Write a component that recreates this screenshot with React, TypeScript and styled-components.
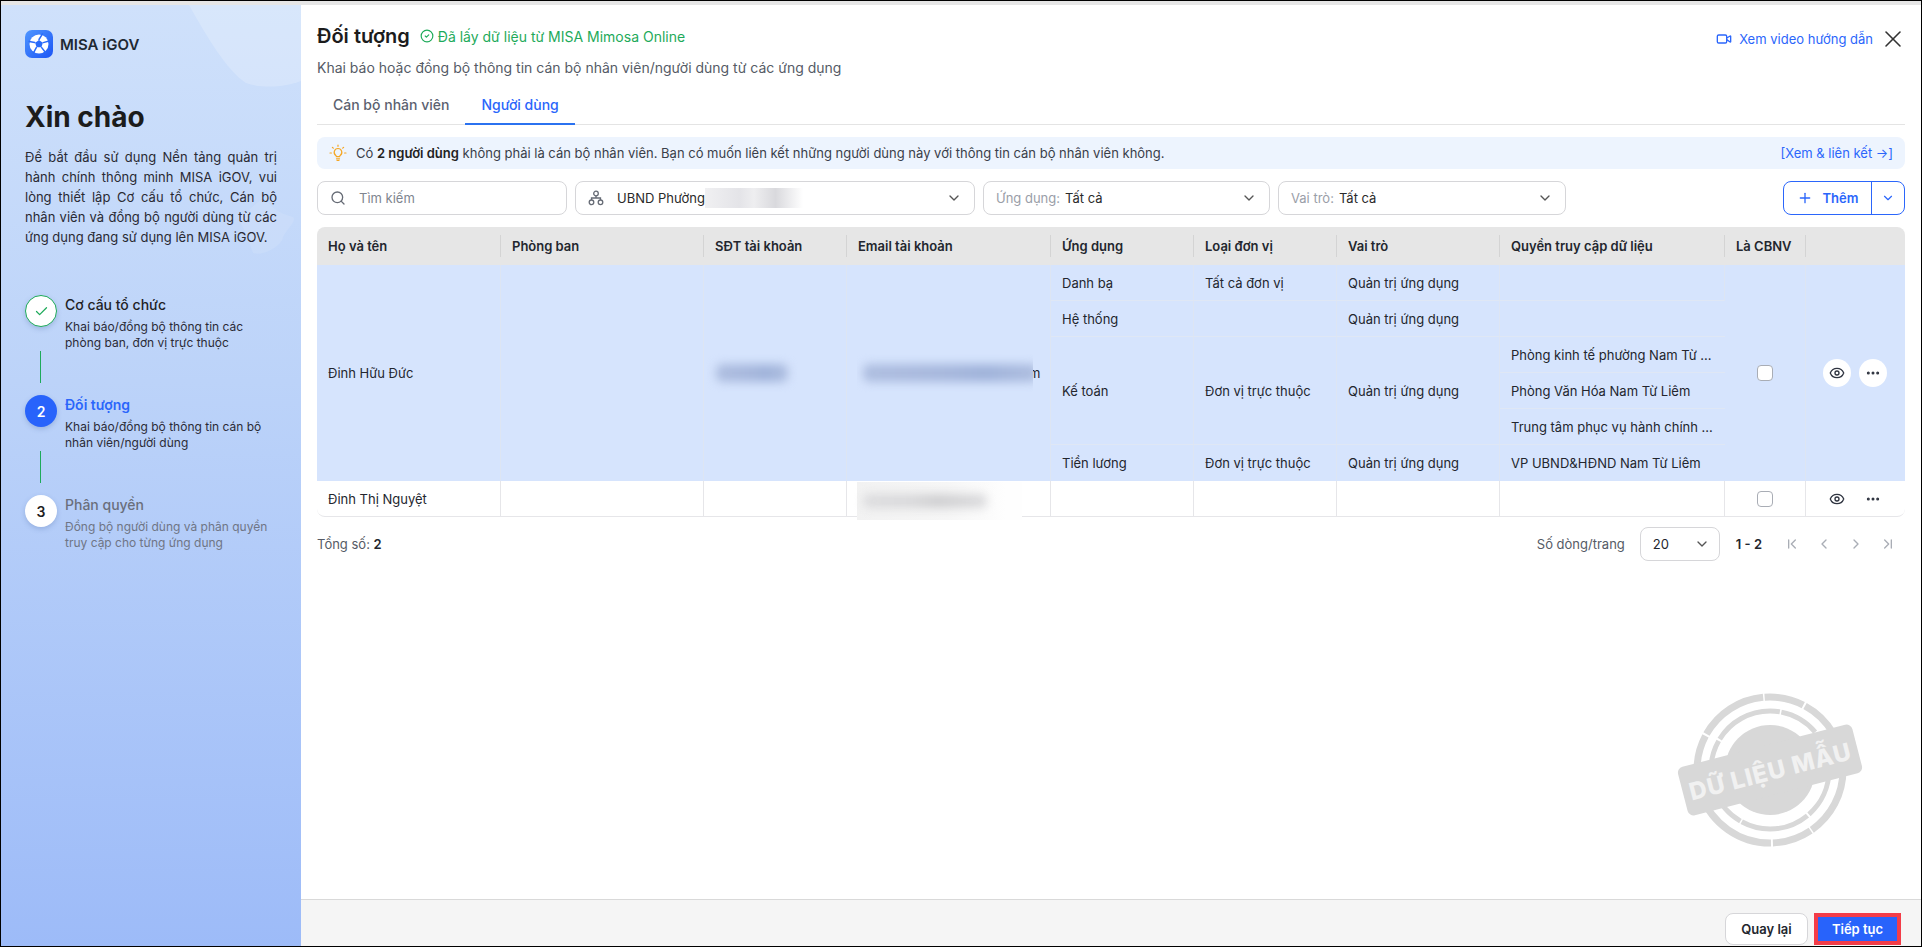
import React from "react";
import styled, { createGlobalStyle } from "styled-components";
import { Search, ChevronDown, Plus, X, Video, CircleCheck, Check, Eye, Ellipsis, ChevronFirst, ChevronLeft, ChevronRight, ChevronLast } from "lucide-react";

const Global = createGlobalStyle`
  html, body { margin: 0; padding: 0; height: 100%; overflow: hidden; background: #000; }
  body, button, input, table { font-family: Inter, "Noto Sans", "Liberation Sans", sans-serif; }
  * { box-sizing: border-box; }
`;

const Frame = styled.div`
  height: 100vh; padding: 1px; background: #000; display: flex;
`;
const Window = styled.div`
  flex: 1; min-width: 0; display: flex; border-top: 4px solid #e6e6e6; background: #fff; position: relative;
`;
const Sidebar = styled.aside`
  width: 300px; flex: none; position: relative; overflow: hidden;
  padding: 25px 24px 0 24px;
  background: linear-gradient(180deg, #cfe1fb 0%, #bcd3f9 40%, #9dbbf8 100%);
`;
const SideArt = styled.svg`
  position: absolute; inset: 0; width: 300px; height: 300px; pointer-events: none;
`;
const Brand = styled.div`
  position: relative; display: flex; align-items: center; gap: 7px; height: 28px;
  font-size: 15px; font-weight: 600; color: #1f2933;
`;
const Hello = styled.h1`
  position: relative; margin: 41px 0 0; font-size: 28px; line-height: 36px; font-weight: 700; color: #1c1c1c;
`;
const Intro = styled.p`
  position: relative; margin: 12px 0 0; font-size: 13px; line-height: 20px; color: #2a2a33; text-align: justify;
`;
const Steps = styled.div`
  position: relative; margin-top: 48px; display: flex; flex-direction: column;
`;
const Step = styled.div`
  display: flex; gap: 8px; height: 56px;
`;
const Bullet = styled.div<{ $kind: "done" | "active" | "todo" }>`
  width: 32px; height: 32px; border-radius: 50%; flex: none;
  display: flex; align-items: center; justify-content: center;
  font-size: 14px; font-weight: 600;
  background: ${p => (p.$kind === "active" ? "#2863fb" : "#fff")};
  color: ${p => (p.$kind === "active" ? "#fff" : "#1f1f1f")};
  border: ${p => (p.$kind === "done" ? "1px solid #1eaa5a" : "none")};
  box-shadow: 0 2px 5px rgba(60, 90, 150, 0.25);
`;
const StepText = styled.div`
  display: flex; flex-direction: column; gap: 4px; min-width: 0;
`;
const StepTitle = styled.div<{ $kind: "done" | "active" | "todo" }>`
  font-size: 14px; line-height: 20px;
  font-weight: ${p => (p.$kind === "active" ? 600 : 500)};
  color: ${p => (p.$kind === "active" ? "#2b66fb" : p.$kind === "todo" ? "#6a6f7c" : "#1f1f26")};
`;
const StepDesc = styled.div<{ $muted?: boolean }>`
  font-size: 12px; line-height: 16px; color: ${p => (p.$muted ? "#6f7585" : "#2b2b36")}; white-space: nowrap;
`;
const Connector = styled.div`
  width: 1px; height: 32px; margin: 0 0 12px 15px; background: #1eaa5a;
`;

const Main = styled.main`
  flex: 1; min-width: 0; position: relative; display: flex; flex-direction: column; padding-top: 17px;
`;
const Content = styled.div`
  padding: 0 16px; display: flex; flex-direction: column;
`;
const TitleRow = styled.div`
  display: flex; align-items: center; height: 28px;
`;
const Title = styled.h2`
  margin: 0; font-size: 20px; line-height: 28px; font-weight: 600; color: #1c1c1c;
`;
const Synced = styled.div`
  display: flex; align-items: center; gap: 4px; margin-left: 10px; font-size: 14px; color: #1eaa5a;
`;
const Guide = styled.a`
  margin-left: auto; display: flex; align-items: center; gap: 7px; font-size: 13px; color: #2b66fb; padding-top: 6px;
`;
const CloseBtn = styled.button`
  border: 0; background: none; padding: 0; margin: 6px 0 0 8px; width: 24px; height: 24px; color: #333;
  display: flex; align-items: center; justify-content: center;
`;
const CloseIcon = styled(X)`
  flex: none;
`;
const Sub = styled.div`
  margin-top: 8px; font-size: 14px; line-height: 20px; color: #555b66;
`;
const Tabs = styled.div`
  margin-top: 7px; height: 40px; display: flex; border-bottom: 1px solid #e4e4e4;
`;
const Tab = styled.div<{ $active?: boolean }>`
  padding: 0 16px; height: 40px; line-height: 40px; font-size: 14px; font-weight: 500;
  color: ${p => (p.$active ? "#2b66fb" : "#5b6170")};
  border-bottom: 2px solid ${p => (p.$active ? "#2b72f0" : "transparent")};
`;
const Notice = styled.div`
  margin-top: 12px; height: 32px; border-radius: 8px; background: #edf4fe;
  display: flex; align-items: center; padding: 0 12px; font-size: 13px; color: #3a3f4a; gap: 9px;
  b { font-weight: 600; color: #222; }
`;
const NoticeLink = styled.a`
  margin-left: auto; color: #2b66fb; font-size: 13px;
`;
const Filters = styled.div`
  margin-top: 12px; display: flex; gap: 8px; height: 34px;
`;
const Field = styled.div<{ $w: number }>`
  width: ${p => p.$w}px; flex: none; height: 34px; border: 1px solid #d6d6d9; border-radius: 8px; background: #fff;
  display: flex; align-items: center; padding: 0 12px; font-size: 13px; color: #2a2a2a;
`;
const FieldIcon = styled.span`
  display: flex; color: #666b75; margin-right: 13px;
`;
const Placeholder = styled.span`
  color: #80858f;
`;
const FieldLabel = styled.span`
  color: #9a9ea8; margin-right: 5px;
`;
const Arrow = styled(ChevronDown)`
  margin-left: auto; color: #555;
`;
const RedactedName = styled.span`
  display: inline-block; width: 98px; height: 20px;
  background: linear-gradient(90deg, #f0f0f2, #e4e4e8 35%, #eeeef0 50%, #d9d9dd 72%, #fff 100%);
`;
const AddGroup = styled.div`
  margin-left: auto; width: 122px; height: 34px; border: 1px solid #2b66fb; border-radius: 8px; display: flex; color: #2b66fb;
  font-size: 13px; font-weight: 600;
`;
const AddMain = styled.div`
  width: 88px; display: flex; align-items: center; justify-content: center; gap: 10px; border-right: 1px solid #2b66fb;
`;
const AddMore = styled.div`
  flex: 1; display: flex; align-items: center; justify-content: center;
`;

const Grid = styled.table`
  margin-top: 12px; width: 1588px; table-layout: fixed; border-collapse: separate; border-spacing: 0; font-size: 13px; color: #23262e;
`;
const Col = styled.col<{ $w: number }>`
  width: ${p => p.$w}px;
`;
const Th = styled.th`
  height: 38px; padding: 0 11px; background: #e6e6e6; text-align: left; font-size: 13px; font-weight: 600; color: #23262e; position: relative;
  &:first-child { border-top-left-radius: 8px; }
  &:last-child { border-top-right-radius: 8px; }
  &:not(:last-child)::after {
    content: ""; position: absolute; right: 0; top: 8px; bottom: 8px; width: 1px; background: #d4d4d4;
  }
`;
const Td = styled.td<{ $hl?: boolean; $center?: boolean }>`
  height: 36px; padding: 0 11px; position: relative; white-space: nowrap; overflow: hidden;
  background: ${p => (p.$hl ? "#d6e4fd" : "#fff")};
  border-right: 1px solid ${p => (p.$hl ? "#dde5f3" : "#e6e6e9")};
  border-bottom: 1px solid ${p => (p.$hl ? "#dfe7f5" : "#e6e6e9")};
  text-align: ${p => (p.$center ? "center" : "left")};
  &:last-child { border-right: 0; }
`;
const SpanCell = styled(Td)`
  border-bottom-color: #d6e4fd;
`;
const OverflowCell = styled(Td)`
  overflow: visible;
`;
const RowTwoFirst = styled(Td)`
  border-bottom-left-radius: 8px;
`;
const RowTwoLast = styled(Td)`
  border-bottom-right-radius: 8px;
`;
const BlurWrap = styled.div`
  display: flex; align-items: center; margin-left: -1px;
`;
const BlurClip = styled.span`
  position: relative; z-index: 1; flex: none; width: 176px; height: 42px; overflow: hidden; background: #d6e4fd;
  display: flex; align-items: center; padding-left: 6px;
`;
const Blob = styled.span<{ $w: number }>`
  display: block; flex: none; width: ${p => p.$w}px; height: 18px; border-radius: 6px; filter: blur(5px);
  background: linear-gradient(90deg, #aebee0, #a6b7dc 50%, #a0b3da 70%, #aebee0);
`;
const ShortBlob = styled(Blob)`
  margin-left: 1px;
`;
const CutLetter = styled.span`
  margin-left: -4px;
`;
const Patch = styled.div`
  position: absolute; left: 10px; top: 1px; width: 165px; height: 38px; z-index: 1;
  background: linear-gradient(90deg, #f2f2f2, #f6f6f6 55%, #fefefe 90%);
  display: flex; align-items: center; padding-left: 6px;
`;
const PatchBlob = styled.span`
  display: block; width: 124px; height: 14px; filter: blur(5px); border-radius: 6px;
  background: linear-gradient(90deg, #dcdcde, #d8d8da 40%, #cfcfd1 60%, #dcdcde);
`;
const Check16 = styled.span`
  display: inline-block; vertical-align: middle; width: 16px; height: 16px; background: #fff; border: 1px solid #a9adb5; border-radius: 4px;
`;
const Actions = styled.div`
  display: flex; justify-content: center; gap: 8px; padding-right: 2px;
`;
const ActionBtn = styled.span<{ $round?: boolean }>`
  width: 28px; height: 28px; border-radius: 50%; color: #2f3440;
  background: ${p => (p.$round ? "#fff" : "transparent")};
  display: flex; align-items: center; justify-content: center;
`;
const Pager = styled.div`
  margin-top: 10px; display: flex; align-items: center; height: 34px; font-size: 13px; color: #555b66;
  b { color: #23262e; font-weight: 600; }
`;
const PageSize = styled.div`
  margin-left: auto; display: flex; align-items: center;
`;
const SizeBox = styled.div`
  width: 80px; height: 34px; margin-left: 15px; border: 1px solid #d6d6d9; border-radius: 8px; color: #23262e;
  display: flex; align-items: center; padding: 0 9px 0 12px;
`;
const Range = styled.b`
  margin-left: 16px; margin-right: 22px;
`;
const PageIcons = styled.div`
  display: flex; gap: 16px; color: #a9adb5; margin-right: 9px;
`;
const Footer = styled.footer`
  margin-top: auto; height: 47px; border-top: 1px solid #d9d9d9; background: #f5f5f5;
  display: flex; justify-content: flex-end; gap: 6px; padding: 13px 20px 0 0;
`;
const BackBtn = styled.button`
  width: 83px; height: 32px; border: 1px solid #d6d6d9; border-radius: 8px; background: #fff; font-size: 13px; font-weight: 600; color: #23262e; padding: 0;
`;
const NextBtn = styled.button`
  width: 87px; height: 32px; border: 0; background: #2863fb; box-shadow: inset 0 0 0 4px #f33c48; font-size: 13px; font-weight: 600; color: #fff; padding: 0;
`;
const StampSvg = styled.svg`
  position: absolute; right: 51px; top: 665px; width: 200px; height: 200px; pointer-events: none;
`;

const Logo = () => (
  <svg width="28" height="28" viewBox="0 0 28 28">
    <defs>
      <linearGradient id="lg" x1="0" y1="0" x2="1" y2="1">
        <stop offset="0" stopColor="#4f96ff" />
        <stop offset="1" stopColor="#1c55f5" />
      </linearGradient>
    </defs>
    <rect width="28" height="28" rx="7" fill="url(#lg)" />
    <circle cx="14" cy="14" r="9.5" fill="#fff" />
    <g stroke="#2a6bfa" strokeWidth="1.5" strokeLinecap="round">
      <path d="M14 9.5 L 17.5 3.8" />
      <path d="M18.3 12.6 L 24 11" />
      <path d="M16.7 17.6 L 20.5 22.5" />
      <path d="M11.3 17.6 L 8.5 22.8" />
      <path d="M9.7 12.6 L 4.2 11.5" />
    </g>
    <path d="M14 10 L17.8 12.8 L16.4 17.2 L11.6 17.2 L10.2 12.8 Z" fill="#2a6bfa" />
  </svg>
);

const OrgIcon = () => (
  <svg width="16" height="16" viewBox="0 0 16 16" fill="none" stroke="currentColor" strokeWidth="1.3">
    <circle cx="8" cy="3.5" r="2.3" />
    <circle cx="3.5" cy="12.3" r="2.3" />
    <circle cx="12.5" cy="12.3" r="2.3" />
    <path d="M8 5.8V8M3.5 10V8H12.5V10" />
  </svg>
);

const Bulb = () => (
  <svg width="18" height="18" viewBox="0 0 18 18" fill="none" stroke="#f5a623" strokeWidth="1.2" strokeLinecap="round">
    <path d="M9 4.5a3.8 3.8 0 0 0-2.2 6.9c.4.3.6.7.6 1.2h3.2c0-.5.2-.9.6-1.2A3.8 3.8 0 0 0 9 4.5Z" />
    <path d="M7.5 14.8h3M8 16.5h2" />
    <path d="M9 1v1.3M3.4 3.3l.9.9M14.6 3.3l-.9.9M1 9h1.4M15.6 9H17" />
  </svg>
);

const steps = [
  { kind: "done" as const, title: "Cơ cấu tổ chức", lines: ["Khai báo/đồng bộ thông tin các", "phòng ban, đơn vị trực thuộc"] },
  { kind: "active" as const, title: "Đối tượng", lines: ["Khai báo/đồng bộ thông tin cán bộ", "nhân viên/người dùng"] },
  { kind: "todo" as const, title: "Phân quyền", lines: ["Đồng bộ người dùng và phân quyền", "truy cập cho từng ứng dụng"] },
];

const widths = [184, 203, 143, 204, 143, 143, 163, 225, 81, 99];
const headers = ["Họ và tên", "Phòng ban", "SĐT tài khoản", "Email tài khoản", "Ứng dụng", "Loại đơn vị", "Vai trò", "Quyền truy cập dữ liệu", "Là CBNV", ""];

export default function App() {
  return (
    <Frame>
      <Global />
      <Window>
        <Sidebar>
          <SideArt viewBox="0 0 300 300">
            <path d="M188 0 C 205 30, 225 65, 245 78 C 262 84, 285 82, 300 76 L300 0 Z" fill="#fff" fillOpacity="0.2" />
            <path d="M236 212 C 250 208, 258 190, 266 196 C 272 204, 278 208, 292 212 C 296 216, 286 224, 282 232 C 282 240, 262 252, 252 248 C 246 232, 244 224, 236 212 Z" fill="#fff" fillOpacity="0.1" />
          </SideArt>
          <Brand><Logo />MISA iGOV</Brand>
          <Hello>Xin chào</Hello>
          <Intro>Để bắt đầu sử dụng Nền tảng quản trị hành chính thông minh MISA iGOV, vui lòng thiết lập Cơ cấu tổ chức, Cán bộ nhân viên và đồng bộ người dùng từ các ứng dụng đang sử dụng lên MISA iGOV.</Intro>
          <Steps>
            {steps.map((s, i) => (
              <React.Fragment key={s.title}>
                <Step>
                  <Bullet $kind={s.kind}>
                    {s.kind === "done" ? <Check size={15} color="#1eaa5a" strokeWidth={2} /> : i + 1}
                  </Bullet>
                  <StepText>
                    <StepTitle $kind={s.kind}>{s.title}</StepTitle>
                    <StepDesc $muted={s.kind === "todo"}>{s.lines[0]}<br />{s.lines[1]}</StepDesc>
                  </StepText>
                </Step>
                {i < 2 && <Connector />}
              </React.Fragment>
            ))}
          </Steps>
        </Sidebar>
        <Main>
          <Content>
            <TitleRow>
              <Title>Đối tượng</Title>
              <Synced><CircleCheck size={14} />Đã lấy dữ liệu từ MISA Mimosa Online</Synced>
              <Guide><Video size={16} />Xem video hướng dẫn</Guide>
              <CloseBtn aria-label="Đóng"><CloseIcon size={28} strokeWidth={1.3} /></CloseBtn>
            </TitleRow>
            <Sub>Khai báo hoặc đồng bộ thông tin cán bộ nhân viên/người dùng từ các ứng dụng</Sub>
            <Tabs>
              <Tab>Cán bộ nhân viên</Tab>
              <Tab $active>Người dùng</Tab>
            </Tabs>
            <Notice>
              <Bulb />
              <span>Có <b>2 người dùng</b> không phải là cán bộ nhân viên. Bạn có muốn liên kết những người dùng này với thông tin cán bộ nhân viên không.</span>
              <NoticeLink>[Xem &amp; liên kết →]</NoticeLink>
            </Notice>
            <Filters>
              <Field $w={250}>
                <FieldIcon><Search size={16} /></FieldIcon>
                <Placeholder>Tìm kiếm</Placeholder>
              </Field>
              <Field $w={400}>
                <FieldIcon><OrgIcon /></FieldIcon>
                UBND Phường<RedactedName />
                <Arrow size={16} />
              </Field>
              <Field $w={287}>
                <FieldLabel>Ứng dụng:</FieldLabel>Tất cả
                <Arrow size={16} />
              </Field>
              <Field $w={288}>
                <FieldLabel>Vai trò:</FieldLabel>Tất cả
                <Arrow size={16} />
              </Field>
              <AddGroup>
                <AddMain><Plus size={16} />Thêm</AddMain>
                <AddMore><ChevronDown size={14} /></AddMore>
              </AddGroup>
            </Filters>
            <Grid>
              <colgroup>
                {widths.map((w, i) => <Col key={i} $w={w} />)}
              </colgroup>
              <thead>
                <tr>{headers.map((h, i) => <Th key={i}>{h}</Th>)}</tr>
              </thead>
              <tbody>
                <tr>
                  <SpanCell $hl rowSpan={6}>Đinh Hữu Đức</SpanCell>
                  <SpanCell $hl rowSpan={6} />
                  <SpanCell $hl rowSpan={6}><ShortBlob $w={72} /></SpanCell>
                  <SpanCell $hl rowSpan={6}>
                    <BlurWrap><BlurClip><Blob $w={175} /></BlurClip><CutLetter>m</CutLetter></BlurWrap>
                  </SpanCell>
                  <Td $hl>Danh bạ</Td>
                  <Td $hl>Tất cả đơn vị</Td>
                  <Td $hl>Quản trị ứng dụng</Td>
                  <Td $hl />
                  <SpanCell $hl $center rowSpan={6}><Check16 /></SpanCell>
                  <SpanCell $hl rowSpan={6}>
                    <Actions>
                      <ActionBtn $round><Eye size={16} /></ActionBtn>
                      <ActionBtn $round><Ellipsis size={16} strokeWidth={2.5} /></ActionBtn>
                    </Actions>
                  </SpanCell>
                </tr>
                <tr>
                  <Td $hl>Hệ thống</Td>
                  <Td $hl />
                  <Td $hl>Quản trị ứng dụng</Td>
                  <Td $hl />
                </tr>
                <tr>
                  <Td $hl rowSpan={3}>Kế toán</Td>
                  <Td $hl rowSpan={3}>Đơn vị trực thuộc</Td>
                  <Td $hl rowSpan={3}>Quản trị ứng dụng</Td>
                  <Td $hl>Phòng kinh tế phường Nam Từ ...</Td>
                </tr>
                <tr>
                  <Td $hl>Phòng Văn Hóa Nam Từ Liêm</Td>
                </tr>
                <tr>
                  <Td $hl>Trung tâm phục vụ hành chính ...</Td>
                </tr>
                <tr>
                  <SpanCell $hl>Tiền lương</SpanCell>
                  <SpanCell $hl>Đơn vị trực thuộc</SpanCell>
                  <SpanCell $hl>Quản trị ứng dụng</SpanCell>
                  <SpanCell $hl>VP UBND&amp;HĐND Nam Từ Liêm</SpanCell>
                </tr>
                <tr>
                  <RowTwoFirst>Đinh Thị Nguyệt</RowTwoFirst>
                  <Td />
                  <Td />
                  <OverflowCell><Patch><PatchBlob /></Patch></OverflowCell>
                  <Td />
                  <Td />
                  <Td />
                  <Td />
                  <Td $center><Check16 /></Td>
                  <RowTwoLast>
                    <Actions>
                      <ActionBtn><Eye size={16} /></ActionBtn>
                      <ActionBtn><Ellipsis size={16} strokeWidth={2.5} /></ActionBtn>
                    </Actions>
                  </RowTwoLast>
                </tr>
              </tbody>
            </Grid>
            <Pager>
              <span>Tổng số: <b>2</b></span>
              <PageSize>
                Số dòng/trang
                <SizeBox>20<Arrow size={16} /></SizeBox>
              </PageSize>
              <Range>1 - 2</Range>
              <PageIcons>
                <ChevronFirst size={16} />
                <ChevronLeft size={16} />
                <ChevronRight size={16} />
                <ChevronLast size={16} />
              </PageIcons>
            </Pager>
          </Content>
          <Footer>
            <BackBtn>Quay lại</BackBtn>
            <NextBtn>Tiếp tục</NextBtn>
          </Footer>
          <StampSvg viewBox="0 0 200 200">
            <g fill="none" stroke="#d8d8d8">
              <circle cx="100" cy="100" r="73" strokeWidth="7" strokeDasharray="70 1.5 40 2 90 1 60 2" />
              <circle cx="100" cy="100" r="59" strokeWidth="5" strokeDasharray="50 2 70 1.5 40 2" />
            </g>
            <circle cx="100" cy="100" r="45" fill="#d8d8d8" />
            <g transform="rotate(-14.5 100 100)">
              <rect x="10" y="75" width="180" height="50" rx="6" fill="#d8d8d8" />
              <text x="100" y="110" textAnchor="middle" fontFamily="Inter, sans-serif" fontWeight="800" fontSize="24" letterSpacing="1" fill="#f1f1f1">DỮ LIỆU MẪU</text>
            </g>
          </StampSvg>
        </Main>
      </Window>
    </Frame>
  );
}
